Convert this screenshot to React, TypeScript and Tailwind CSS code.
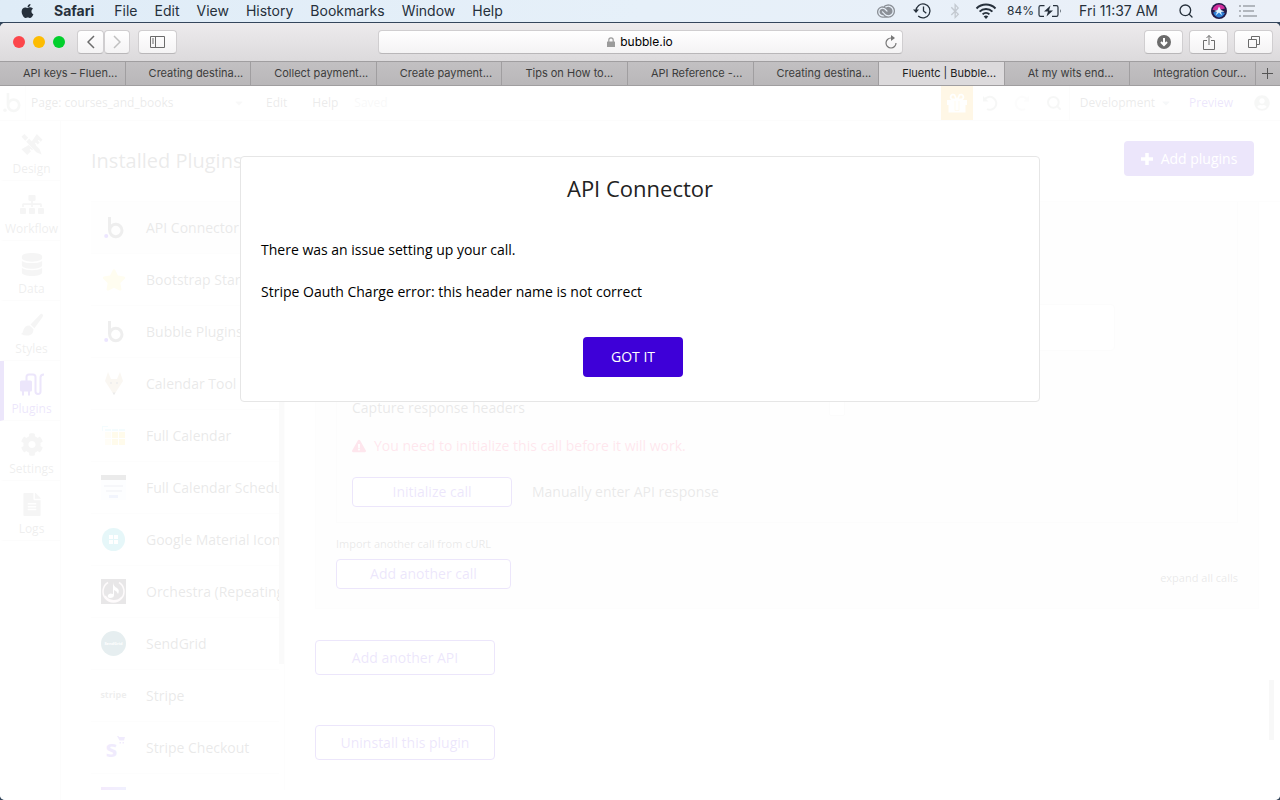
import React from "react";
import {
  FaApple, FaBluetoothB, FaCog, FaDatabase, FaExclamationTriangle, FaFileAlt,
  FaSitemap, FaStar, FaUserCircle, FaCaretDown,
} from "react-icons/fa";
import { SiAdobecreativecloud } from "react-icons/si";
import { Search } from "lucide-react";

const menus = ["File", "Edit", "View", "History", "Bookmarks", "Window", "Help"];

const tabs = [
  "API keys – Fluen...",
  "Creating destina...",
  "Collect payment...",
  "Create payment...",
  "Tips on How to...",
  "API Reference -...",
  "Creating destina...",
  "Fluentc | Bubble...",
  "At my wits end...",
  "Integration Cour...",
];
const activeTab = 7;

/* ---------- macOS menu bar ---------- */

function MenuBar() {
  return (
    <nav className="flex h-[22px] shrink-0 items-center bg-linear-to-r from-[#dfecf7] via-[#e6f0f9] to-[#ebf0f8] pl-5 pr-[23px] font-[Inter,sans-serif] text-sm text-[#26303b]">
      <button aria-label="Apple menu" className="mr-[19px]">
        <FaApple className="h-4 w-[15px]" />
      </button>
      <button className="mr-5 font-bold">Safari</button>
      <div className="flex gap-[17px]">
        {menus.map((m) => (
          <button key={m}>{m}</button>
        ))}
      </div>

      <div className="ml-auto flex items-center">
        <SiAdobecreativecloud className="mr-4 h-[18px] w-5 text-[#8b9097]" />
        <TimeMachineIcon />
        <FaBluetoothB className="mr-[14px] h-4 w-3 text-[#c3c9d0]" />
        <WifiIcon />
        <span className="mr-1 text-xs">84%</span>
        <BatteryIcon />
        <span className="mr-5">Fri 11:37 AM</span>
        <Search className="mr-[17px] h-4 w-4" strokeWidth={2} />
        <SiriIcon />
        <ListIcon />
      </div>
    </nav>
  );
}

function TimeMachineIcon() {
  return (
    <svg className="mr-[17px] h-[18px] w-5" viewBox="0 0 20 18" fill="none" stroke="currentColor" strokeWidth="1.3">
      <path d="M4 9a7 7 0 1 1 2.2 5" />
      <path d="M11.5 4.5V9l2.8 2.2" />
      <path d="M1 7.5h6L4 11z" fill="currentColor" stroke="none" />
    </svg>
  );
}

function WifiIcon() {
  return (
    <svg className="mr-[10px] h-4 w-[22px]" viewBox="0 0 22 16" fill="none" stroke="currentColor" strokeWidth="2">
      <path d="M1.5 5.5a13.5 13.5 0 0 1 19 0" />
      <path d="M4.6 8.6a9 9 0 0 1 12.8 0" />
      <path d="M7.6 11.4a4.9 4.9 0 0 1 6.8 0" />
      <path d="M11 16l-2.3-2.4a3.3 3.3 0 0 1 4.6 0z" fill="currentColor" stroke="none" />
    </svg>
  );
}

function BatteryIcon() {
  return (
    <svg className="mr-[17px] h-3.5 w-6" viewBox="0 0 24 14" fill="none" stroke="currentColor" strokeWidth="1.2">
      <path d="M6.500 1.600H2.600Q1 1.600 1 3.200v7.600q0 1.600 1.600 1.600H6M15 1.600h3.400q1.600 0 1.600 1.600v7.600q0 1.600-1.600 1.600H14" />
      <path d="M22 5q1.500 2 0 4z" fill="currentColor" stroke="none" />
      <path d="M12.500 1.500 6 7.600h4L8.500 12.500l6.500-6h-4z" fill="currentColor" stroke="none" />
    </svg>
  );
}

function SiriIcon() {
  return (
    <svg className="mr-3 h-4 w-4" viewBox="0 0 16 16">
      <circle cx="8" cy="8" r="8" fill="#241a48" />
      <path d="M1.500 7Q3 1.500 8.500 1.500q4 0 5.500 4L8 7z" fill="#d02d9c" />
      <path d="M2 9.500Q4 14 8 14.500q4-.5 6-4.500L8 8z" fill="#2f7fd6" />
      <path d="M8 3.500 10 7l3.500 1.500-3.500.5 1 3.500-3-3-3.500 3L6 9 3 8l3.500-1z" fill="#dff3ff" />
    </svg>
  );
}

function ListIcon() {
  return (
    <svg className="h-3 w-[18px] text-[#b1b6bd]" viewBox="0 0 18 12" fill="currentColor">
      <path d="M0 0h2v2H0zM4 0h12v2H4zM0 5h2v2H0zM4 5h11v2H4zM0 10h2v2H0zM4 10h14v2H4z" />
    </svg>
  );
}

/* ---------- Safari toolbar ---------- */

const toolButton =
  "flex h-6 items-center justify-center rounded border border-[#d0ced0] border-b-[#b9b7b9] bg-linear-to-b from-white to-[#f4f3f4] text-[#6b6b6b]";

function Toolbar() {
  return (
    <div className="grid h-[38px] shrink-0 grid-cols-[1fr_minmax(0,525px)_1fr] items-center bg-linear-to-b from-[#edebed] to-[#dcdadc]">
      <div className="flex items-center pl-[13px]">
        <div className="mr-3 flex gap-2">
          <span className="h-3 w-3 rounded-full bg-[#fc464b]" />
          <span className="h-3 w-3 rounded-full bg-[#fdbc02]" />
          <span className="h-3 w-3 rounded-full bg-[#02cf2c]" />
        </div>
        <button aria-label="Back" className={`${toolButton} w-[27px]`}>
          <svg className="h-3.5 w-2" viewBox="0 0 8 14" fill="none" stroke="currentColor" strokeWidth="1.5">
            <path d="M7 1 1 7l6 6" />
          </svg>
        </button>
        <button aria-label="Forward" className={`${toolButton} mr-2 w-[26px]`}>
          <svg className="h-3.5 w-2 text-[#c0c0c0]" viewBox="0 0 8 14" fill="none" stroke="currentColor" strokeWidth="1.5">
            <path d="m1 1 6 6-6 6" />
          </svg>
        </button>
        <button aria-label="Show sidebar" className={`${toolButton} w-[39px]`}>
          <svg className="h-3 w-[15px]" viewBox="0 0 15 12" fill="none" stroke="currentColor">
            <path d="M.5.5h14v11H.5zM5.500.5v11M2 3h2M2 5h2M2 7h2" />
          </svg>
        </button>
      </div>

      <div className="relative flex h-6 items-center justify-center rounded border border-[#d0ced0] border-b-[#b9b7b9] bg-linear-to-b from-white to-[#f4f3f4] font-[Inter,sans-serif] text-xs text-black">
        <svg className="mr-[5px] h-2.5 w-2 text-[#9b9b9b]" viewBox="0 0 8 10">
          <path d="M1.800 5V3a2.200 2.200 0 0 1 4.400 0v2" fill="none" stroke="currentColor" strokeWidth="1.200" />
          <rect y="4.500" width="8" height="5.500" rx="0.500" fill="currentColor" />
        </svg>
        <span>bubble.io</span>
        <button aria-label="Reload" className="absolute right-[5px] text-[#777]">
          <svg className="h-3.5 w-3" viewBox="0 0 12 14" fill="none" stroke="currentColor" strokeWidth="1.200">
            <path d="M6 3a5 5 0 1 0 5 5" />
            <path d="M6 0v6l4-3z" fill="currentColor" stroke="none" />
          </svg>
        </button>
      </div>

      <div className="flex justify-end gap-[6px] pr-[7px]">
        <button aria-label="Downloads" className={`${toolButton} w-[39px]`}>
          <svg className="h-3.5 w-3.5" viewBox="0 0 14 14">
            <circle cx="7" cy="7" r="7" fill="currentColor" />
            <path d="M7 3v7M4 7l3 3 3-3" fill="none" stroke="#fff" strokeWidth="2" />
          </svg>
        </button>
        <button aria-label="Share" className={`${toolButton} w-[39px]`}>
          <svg className="h-4 w-3" viewBox="0 0 12 16" fill="none" stroke="currentColor">
            <path d="M4 6.500H.5v9h11v-9H8M6 11V1.500M3.500 4 6 1.500 8.500 4" />
          </svg>
        </button>
        <button aria-label="Show all tabs" className={`${toolButton} w-[39px]`}>
          <svg className="h-3 w-3" viewBox="0 0 12 12" fill="none" stroke="currentColor">
            <path d="M.5 3.500h8v8h-8zM3.500 3.500v-3h8v8h-3" />
          </svg>
        </button>
      </div>
    </div>
  );
}

function TabBar() {
  return (
    <div className="flex h-[25px] shrink-0 border-y border-[#a09ea0] bg-linear-to-b from-[#c2c0c2] to-[#b9b7b9] font-[Inter,sans-serif] text-[11px] text-[#3c3c3c]">
      {tabs.map((t, i) => (
        <button
          key={i}
          className={`min-w-0 flex-1 overflow-hidden whitespace-nowrap border-r border-[#a09ea0] pl-[23px] text-left ${
            i === activeTab ? "bg-[#dcdadc] text-[#1c1c1c]" : ""
          }`}
        >
          {t}
        </button>
      ))}
      <button aria-label="New tab" className="flex w-6 items-center justify-center">
        <svg className="h-[11px] w-[11px]" viewBox="0 0 11 11" stroke="#555">
          <path d="M5.500 0v11M0 5.500h11" />
        </svg>
      </button>
    </div>
  );
}

/* ---------- Bubble editor ---------- */

function BubbleLogo({ dot, className }: { dot: string; className: string }) {
  return (
    <svg className={className} viewBox="0 0 20 22" fill="none">
      <circle cx="2.200" cy="19" r="2" fill={dot} />
      <path d="M5.500 0v13" stroke="currentColor" strokeWidth="3" />
      <circle cx="11.800" cy="13.500" r="6.200" stroke="currentColor" strokeWidth="3" />
    </svg>
  );
}

function GiftIcon() {
  return (
    <svg className="h-5 w-[22px]" viewBox="0 0 22 20">
      <path d="M1 7h20v5H1zM2.500 12h17v7.500h-17z" fill="currentColor" />
      <path d="M10.500 6.500H6.500a2.500 2.500 0 1 1 2-4.500zM11.500 6.500h4a2.500 2.500 0 1 0-2-4.500z" fill="none" stroke="currentColor" strokeWidth="1.800" />
      <path d="M9 8v9.500h4V8" fill="none" stroke="#ffb000" strokeWidth="0.600" />
    </svg>
  );
}

function UndoIcon({ className }: { className?: string }) {
  return (
    <svg className={className} viewBox="0 0 16 16" fill="none" stroke="currentColor" strokeWidth="2">
      <path d="M2.500 4.500A6.500 6.500 0 1 1 5 14.200" />
      <path d="M1 1v5.500h5.500z" fill="currentColor" stroke="none" />
    </svg>
  );
}

function EditorHeader() {
  return (
    <header className="flex h-[35px] shrink-0 items-center border-b border-[#ddd] text-xs text-[#333]">
      <div className="flex h-full w-[26px] items-center border-r border-[#eee] pl-[3px]">
        <BubbleLogo dot="#aaa" className="h-5 w-[18px] text-[#aaa]" />
      </div>
      <button className="flex w-[219px] items-center justify-between pl-[5px] text-left">
        Page: courses_and_books
        <FaCaretDown className="h-3 w-3 text-[#bbb]" />
      </button>
      <button className="ml-[21px]">Edit</button>
      <button className="ml-[25px]">Help</button>
      <span className="ml-4 text-[#bbb]">Saved</span>

      <div className="ml-auto flex h-full items-center">
        <button aria-label="Gifts" className="mr-[9px] flex h-full w-8 items-center justify-center bg-[#ffb000] text-white">
          <GiftIcon />
        </button>
        <button aria-label="Undo" className="mr-4 text-[#aaa]">
          <UndoIcon className="h-4 w-4" />
        </button>
        <button aria-label="Redo" className="mr-4 text-[#ddd]">
          <UndoIcon className="h-4 w-4 -scale-x-100" />
        </button>
        <button aria-label="Search" className="mr-[7px] text-[#aaa]">
          <Search className="h-4 w-4" strokeWidth={3} />
        </button>
        <button className="flex h-full items-center border-l border-[#ddd] pl-[10px]">
          Development
          <FaCaretDown className="ml-[5px] h-3 w-3 text-[#a9b4c4]" />
        </button>
        <a href="#preview" className="ml-[17px] text-[#3e00d8]">Preview</a>
        <button aria-label="Account" className="ml-[21px] mr-[10px] text-[#aaa]">
          <FaUserCircle className="h-4 w-4" />
        </button>
      </div>
    </header>
  );
}

function DesignIcon({ className }: { className?: string }) {
  return (
    <svg className={className} viewBox="0 0 24 24" fill="currentColor">
      <path d="m1 4 3-3 4 4-3 3zM6 9l3-3 11 11 2 5.500L16.500 20z" />
      <path d="m17 1 6 6-2 2-2-2-1 1 2 2-2 2-2-2-1 1 1.500 1.500-1.500 1.500-4-4zM8.500 12.500 1 17l6 6 4-4-1.500-1.500 1-1 1.500 1.500 1-1z" />
    </svg>
  );
}

function BrushIcon({ className }: { className?: string }) {
  return (
    <svg className={className} viewBox="0 0 24 24" fill="currentColor">
      <path d="M22.500 1q2 1 0 4l-8 11-4-4L20 2q1.500-1.500 2.500-1zM9.500 13l4 4q0 5.500-5 6.500-4 .5-8-1.500 2-1 2.500-4 1-5 6.500-5z" />
    </svg>
  );
}

function PluginIcon({ className }: { className?: string }) {
  return (
    <svg className={className} viewBox="0 0 24 22" fill="none" stroke="currentColor">
      <rect y="7" width="12" height="11" rx="1.500" fill="currentColor" stroke="none" />
      <path d="M3 17v5M9 17v5" strokeWidth="2" />
      <path d="M6.500 8V3.500Q6.500 1 9 1h4q2.500 0 2.500 2.500v14.500a2.500 2.500 0 0 0 5 0V4q0-3 3.500-3" strokeWidth="2" />
    </svg>
  );
}

const navItems = [
  { label: "Design", Icon: DesignIcon },
  { label: "Workflow", Icon: FaSitemap },
  { label: "Data", Icon: FaDatabase },
  { label: "Styles", Icon: BrushIcon },
  { label: "Plugins", Icon: PluginIcon, active: true },
  { label: "Settings", Icon: FaCog },
  { label: "Logs", Icon: FaFileAlt },
];

function SideNav() {
  return (
    <nav className="w-[61px] shrink-0 border-r border-[#ddd] text-xs">
      {navItems.map(({ label, Icon, active }) => (
        <button
          key={label}
          className={`flex h-[60px] w-full flex-col items-center border-b border-l-4 border-b-[#ddd] pr-px pt-3 ${
            active ? "border-l-[#3e00d8] text-[#3e00d8]" : "border-l-transparent text-[#555]"
          }`}
        >
          <Icon className={`h-[23px] w-6 ${active ? "" : "text-[#999]"}`} />
          <span className="mt-[5px] whitespace-nowrap">{label}</span>
        </button>
      ))}
    </nav>
  );
}

function FoxIcon() {
  return (
    <svg className="h-6 w-[18px]" viewBox="0 0 18 24">
      <path d="M3 0l3 7h6l3-7 3 9-9 14L0 9z" fill="#c9ad80" />
      <circle cx="6" cy="11" r="1" fill="#444" />
      <circle cx="12" cy="11" r="1" fill="#444" />
      <path d="M7.500 20.500h3L9 23z" fill="#333" />
    </svg>
  );
}

function CalendarIcon() {
  return (
    <svg className="h-5 w-6" viewBox="0 0 24 20">
      <path d="M0 5V0h6v1H1v4zM3 3h6v2H3zM10 3h6v2h-6zM17 3h6v2h-6z" fill="#8fdcf5" />
      <path d="M3 6h6v6H3zM3 13h6v6H3z" fill="#ffeaa0" />
      <path d="M10 6h6v6h-6zM17 6h6v6h-6zM10 13h6v6h-6zM17 13h6v6h-6z" fill="#ffd633" />
    </svg>
  );
}

function SchedulerIcon() {
  return (
    <div className="flex h-[25px] w-[25px] flex-col items-center bg-[#eef5ff]">
      <span className="h-[5px] w-full bg-[#333]" />
      <span className="mt-[5px] h-0.5 w-[19px] bg-[#a0aec8]" />
      <span className="mt-[3px] h-0.5 w-4 bg-[#a0aec8]" />
      <span className="mt-[3px] h-[3px] w-[9px] bg-[#7d9fe6]" />
    </div>
  );
}

function MaterialIcon() {
  return (
    <svg className="h-[23px] w-[23px]" viewBox="0 0 23 23">
      <circle cx="11.500" cy="11.500" r="11.500" fill="#00acc1" />
      <path d="M7 7h4v4H7zM12 7h4v4h-4zM7 12h4v4H7zM12 12h4v4h-4z" fill="#fff" />
    </svg>
  );
}

function OrchestraIcon() {
  return (
    <svg className="h-[25px] w-[25px]" viewBox="0 0 25 25">
      <path d="M0 0h25v25H0z" fill="#1d1016" />
      <path d="M7 3.500a10.500 10.500 0 1 0 11 0M4 17A10.500 10.500 0 0 0 21 18" fill="none" stroke="#f3d5df" strokeWidth="1.500" />
      <path d="M12 3q0 4 4 6 3 2 1 6-1-3-4-4v5q0 3-4 3-3-.5-2-3 1.500-2.500 5-1z" fill="#fff" />
    </svg>
  );
}

function CheckoutIcon() {
  return (
    <span className="flex items-start pl-1 text-[#6a3ae8]">
      <b className="text-2xl leading-6">s</b>
      <svg className="h-2 w-2" viewBox="0 0 8 8" fill="currentColor">
        <path d="M0 0h1.500l.5 1h6L7 4.500H2.500zM2.500 6h1.500v1.500H2.500zM5.500 6H7v1.500H5.500z" />
      </svg>
    </span>
  );
}

const logo = <BubbleLogo dot="#3e00ff" className="h-[22px] w-5 text-[#555]" />;

const plugins: { name: string; icon: React.ReactNode }[] = [
  { name: "API Connector", icon: logo },
  { name: "Bootstrap Star Rating", icon: <FaStar className="h-[22px] w-6 text-[#ffe766]" /> },
  { name: "Bubble Plugins", icon: logo },
  { name: "Calendar Tool", icon: <FoxIcon /> },
  { name: "Full Calendar", icon: <CalendarIcon /> },
  { name: "Full Calendar Scheduler", icon: <SchedulerIcon /> },
  { name: "Google Material Icons", icon: <MaterialIcon /> },
  { name: "Orchestra (Repeating)", icon: <OrchestraIcon /> },
  {
    name: "SendGrid",
    icon: (
      <span className="flex h-[25px] w-[25px] items-center justify-center rounded-full bg-[#005864] text-[4px] font-bold text-white">
        SendGrid
      </span>
    ),
  },
  { name: "Stripe", icon: <b className="text-[9px] text-[#555]">stripe</b> },
  { name: "Stripe Checkout", icon: <CheckoutIcon /> },
  { name: "Stripe Connect", icon: <span className="h-[25px] w-[25px] bg-linear-to-r from-[#8a2be2] to-[#6a6af8]" /> },
];

function PluginList() {
  return (
    <div className="flex w-[194px] shrink-0 overflow-hidden border-r border-[#eee]">
      <ul className="min-w-0 flex-1 text-sm text-[#222]">
        {plugins.map((p, i) => (
          <li key={p.name} className={`h-[52px] border-b border-[#eee] ${i === 0 ? "bg-[#f0f0f0]" : ""}`}>
            <button className="flex h-full w-full items-center overflow-hidden whitespace-nowrap text-left">
              <span className="flex w-[45px] shrink-0 justify-center">{p.icon}</span>
              <span className="pl-[10px]">{p.name}</span>
            </button>
          </li>
        ))}
      </ul>
      <div className="h-[462px] w-[5px] shrink-0 bg-[#ccc]" />
    </div>
  );
}

const outlineButton = "block rounded border border-[#3e00d8] bg-white text-[#3e00d8]";

function ConnectorSettings() {
  return (
    <section className="flex min-w-0 flex-1 overflow-hidden text-sm text-[#222]">
      <div className="min-w-0 flex-1 pl-[30px] pr-[10px]">
        <div className="border border-t-0 border-[#e8e8e8] bg-[#f7f7f7] px-5 pb-[19px]">
          <div className="border border-t-0 border-[#e4e4e4] bg-[#f5f5f5] px-[15px] pb-[15px] pt-[102px]">
            <textarea aria-label="Body" className="mb-[39px] block h-[47px] w-[763px] max-w-full resize-none rounded border border-[#e0e0e0] bg-white" />
            <div className="flex h-9 items-center">
              <label htmlFor="capture" className="w-[477px]">Capture response headers</label>
              <input id="capture" type="checkbox" className="h-4 w-4 appearance-none rounded-xs border border-[#e0e0e0] bg-white" />
            </div>
            <p className="flex h-10 items-center text-[#f5004b]">
              <FaExclamationTriangle className="mr-2 h-3.5 w-3.5" />
              You need to initialize this call before it will work.
            </p>
            <div className="mt-[11px] flex items-center gap-5">
              <button className={`${outlineButton} h-[30px] w-40`}>Initialize call</button>
              <button>Manually enter API response</button>
            </div>
          </div>
          <button className="mt-[11px] block h-5 text-[11px] leading-5">Import another call from cURL</button>
          <div className="mt-[5px] flex items-end justify-between">
            <button className={`${outlineButton} h-[30px] w-[175px]`}>Add another call</button>
            <button className="text-[11px] leading-[22px]">expand all calls</button>
          </div>
        </div>
        <button className={`${outlineButton} mt-[31px] h-[35px] w-[180px]`}>Add another API</button>
        <button className={`${outlineButton} mt-[50px] h-[35px] w-[180px]`}>Uninstall this plugin</button>
      </div>
      <div className="mb-[50px] mr-[6px] h-[60px] w-[5px] shrink-0 self-end bg-[#bbb]" />
    </section>
  );
}

function PluginsPage() {
  return (
    <main className="flex min-w-0 flex-1 flex-col pb-[10px] pl-[30px]">
      <div className="flex h-20 shrink-0 items-center justify-between pr-[26px]">
        <h1 className="text-xl text-[#333]">Installed Plugins</h1>
        <button className="mt-5 flex h-[35px] w-[130px] items-center justify-center gap-2 self-start rounded bg-[#3e00d8] text-sm text-white">
          <svg className="h-3 w-3" viewBox="0 0 12 12" fill="none" stroke="currentColor" strokeWidth="3.5">
            <path d="M6 0v12M0 6h12" />
          </svg>
          Add plugins
        </button>
      </div>
      <div className="flex min-h-0 flex-1 border-t border-[#eee]">
        <PluginList />
        <ConnectorSettings />
      </div>
    </main>
  );
}

function ErrorDialog() {
  return (
    <div className="absolute inset-0 flex items-start justify-center bg-white/90 pt-[70px]">
      <div role="dialog" aria-labelledby="dialog-title" className="w-full max-w-[800px] rounded border border-[#e6e6e6] bg-white px-5 pb-6 pt-[15px] text-sm text-black">
        <h2 id="dialog-title" className="text-center text-[22px] leading-8 text-[#222]">API Connector</h2>
        <p className="mt-[35px] leading-[21px]">There was an issue setting up your call.</p>
        <p className="mt-[21px] leading-[21px]">Stripe Oauth Charge error: this header name is not correct</p>
        <div className="mt-[35px] flex justify-center pr-[14px]">
          <button className="h-10 w-[100px] rounded bg-[#3e00d8] text-white">GOT IT</button>
        </div>
      </div>
    </div>
  );
}

export default function App() {
  return (
    <div className="flex h-screen flex-col overflow-hidden bg-[#34465c]">
      <MenuBar />
      <div className="mt-px flex min-h-0 flex-1 flex-col overflow-hidden rounded-[5px] bg-white">
        <Toolbar />
        <TabBar />
        <div className="relative flex min-h-0 flex-1 flex-col font-['Open_Sans',sans-serif]">
          <EditorHeader />
          <div className="flex min-h-0 flex-1">
            <SideNav />
            <PluginsPage />
          </div>
          <ErrorDialog />
        </div>
      </div>
    </div>
  );
}
